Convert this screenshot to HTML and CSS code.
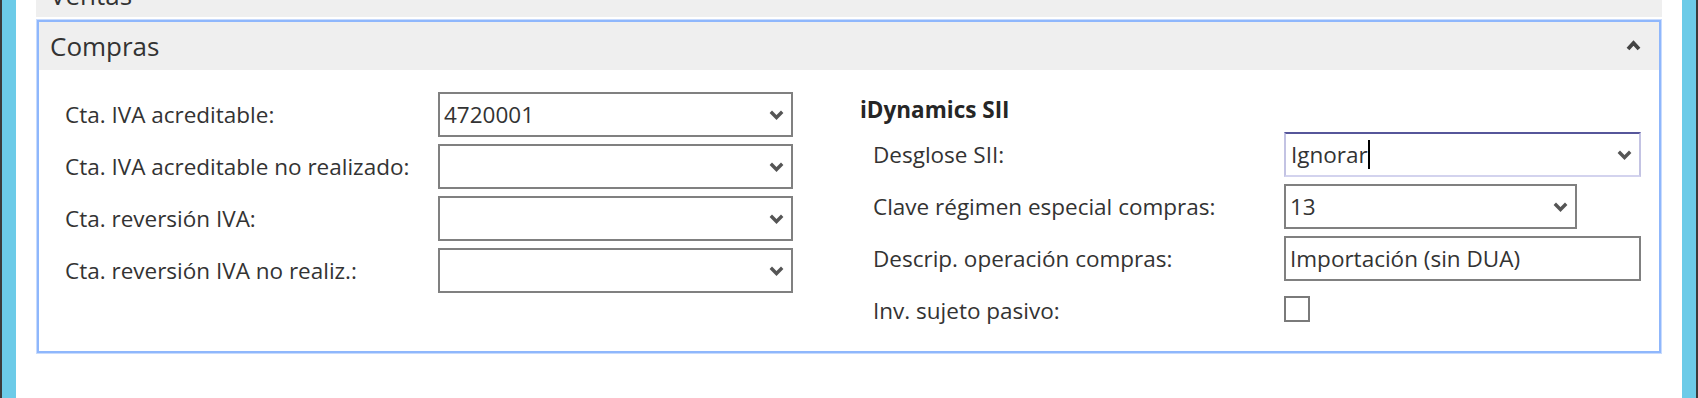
FILE: index.html
```html
<!DOCTYPE html>
<html lang="es">
<head>
<meta charset="utf-8">
<title>Compras</title>
<link rel="stylesheet" href="styles.css">
</head>
<body>
<div class="page">
  <div class="edge edge-left"></div>
  <div class="main">
    <div class="collapsed-bar">
      <div class="collapsed-title">Ventas</div>
    </div>
    <section class="section">
      <div class="frame">
        <header class="section-header">
          <span class="section-title">Compras</span>
          <svg class="chevron-up" width="15" height="11" viewBox="0 0 15 11" aria-hidden="true"><path d="M2 9 L7.5 3 L13 9" fill="none" stroke="#444" stroke-width="3.8" stroke-linejoin="miter"/></svg>
        </header>
        <div class="section-body">
          <div class="col-left">
            <div class="field-grid left-grid">
              <label class="label">Cta. IVA acreditable:</label>
              <div class="box"><span class="value">4720001</span><svg class="chev" width="15" height="10" viewBox="0 0 15 10"><path d="M1.8 1.8 L7.5 7.5 L13.2 1.8" fill="none" stroke="#555" stroke-width="3.4"/></svg></div>
              <label class="label">Cta. IVA acreditable no realizado:</label>
              <div class="box"><span class="value"></span><svg class="chev" width="15" height="10" viewBox="0 0 15 10"><path d="M1.8 1.8 L7.5 7.5 L13.2 1.8" fill="none" stroke="#555" stroke-width="3.4"/></svg></div>
              <label class="label">Cta. reversión IVA:</label>
              <div class="box"><span class="value"></span><svg class="chev" width="15" height="10" viewBox="0 0 15 10"><path d="M1.8 1.8 L7.5 7.5 L13.2 1.8" fill="none" stroke="#555" stroke-width="3.4"/></svg></div>
              <label class="label">Cta. reversión IVA no realiz.:</label>
              <div class="box"><span class="value"></span><svg class="chev" width="15" height="10" viewBox="0 0 15 10"><path d="M1.8 1.8 L7.5 7.5 L13.2 1.8" fill="none" stroke="#555" stroke-width="3.4"/></svg></div>
            </div>
          </div>
          <div class="col-right">
            <div class="group-title">iDynamics SII</div>
            <div class="field-grid right-grid">
              <label class="label">Desglose SII:</label>
              <div class="box box-focus"><span class="value">Ignorar<span class="caret"></span></span><svg class="chev" width="15" height="10" viewBox="0 0 15 10"><path d="M1.8 1.8 L7.5 7.5 L13.2 1.8" fill="none" stroke="#555" stroke-width="3.4"/></svg></div>
              <label class="label">Clave régimen especial compras:</label>
              <div class="box box-short"><span class="value">13</span><svg class="chev" width="15" height="10" viewBox="0 0 15 10"><path d="M1.8 1.8 L7.5 7.5 L13.2 1.8" fill="none" stroke="#555" stroke-width="3.4"/></svg></div>
              <label class="label">Descrip. operación compras:</label>
              <div class="box"><span class="value">Importación (sin DUA)</span></div>
              <label class="label">Inv. sujeto pasivo:</label>
              <div class="check-cell"><span class="checkbox"></span></div>
            </div>
          </div>
        </div>
      </div>
    </section>
  </div>
  <div class="edge edge-right"></div>
</div>
</body>
</html>
```
FILE: styles.css
```css
* { box-sizing: border-box; }

html, body {
  margin: 0;
  padding: 0;
  background: #ffffff;
}

body {
  font-family: "Open Sans", "Noto Sans", "DejaVu Sans", sans-serif;
  color: #333333;
}

.page {
  display: flex;
  width: 1698px;
  height: 398px;
  overflow: hidden;
}

.edge {
  width: 16px;
  flex: 0 0 16px;
  background: #6ccbe8;
}

.edge-left { border-left: 2px solid #3b3b3b; }
.edge-right { border-right: 2px solid #3b3b3b; }

.main {
  flex: 1;
  padding: 0 20px;
}

.collapsed-bar {
  height: 17px;
  overflow: hidden;
  background: #efefef;
}

.collapsed-title {
  height: 48px;
  margin-top: -29px;
  padding-left: 14px;
  line-height: 48px;
  font-size: 26px;
  color: #333;
}

.section {
  margin-top: 2px;
  border: 1px solid #c8dbfd;
}

.frame {
  border: 2px solid #8fb7fc;
}

.section-header {
  height: 48px;
  background: #efefef;
  display: flex;
  align-items: center;
  justify-content: space-between;
  padding: 0 18px 0 11px;
}

.section-title {
  font-size: 26px;
  line-height: 48px;
  color: #333;
}

.chevron-up {
  display: block;
  margin-bottom: 2px;
}

.section-body {
  height: 281px;
  display: flex;
  padding: 22px 18px 0 26px;
}

.col-left {
  width: 728px;
  flex: 0 0 728px;
}

.col-right {
  margin-left: 67px;
  flex: 1;
}

.field-grid {
  display: grid;
  grid-auto-rows: 45px;
  row-gap: 7px;
  align-items: center;
}

.left-grid {
  grid-template-columns: 373px 355px;
}

.right-grid {
  padding-left: 13px;
  grid-template-columns: 411px 357px;
}

.label {
  font-size: 22.5px;
  color: #333;
  white-space: nowrap;
}

.group-title {
  height: 40px;
  line-height: 40px;
  font-size: 22.5px;
  font-weight: 700;
  color: #262626;
  margin-top: -2px;
  margin-bottom: 2px;
}

.box {
  height: 45px;
  border: 2px solid #808080;
  background: #fff;
  display: flex;
  align-items: center;
  justify-content: space-between;
  padding: 0 7px 0 4px;
}

.box-short {
  width: 293px;
}

.box-focus {
  border-color: #56569a #c3c3e3 #d3d3ee #c3c3e3;
  padding-left: 5px;
}

.value {
  font-size: 22.5px;
  color: #333;
  white-space: nowrap;
  display: flex;
  align-items: center;
}

.caret {
  display: inline-block;
  width: 2px;
  height: 29px;
  background: #000;
  margin-left: 0;
}

.chev {
  display: block;
  flex: 0 0 auto;
}

.check-cell {
  display: flex;
  align-items: center;
}

.checkbox {
  display: block;
  width: 26px;
  height: 26px;
  border: 2px solid #7a7a7a;
  background: #fff;
  margin-top: -3px;
}
```
